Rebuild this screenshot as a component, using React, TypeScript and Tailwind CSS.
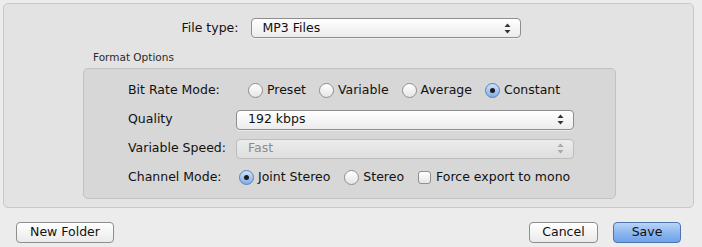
import React from "react";

const font = { fontFamily: '"DejaVu Sans", "Lucida Grande", sans-serif' };

const Arrows = ({ disabled }: { disabled?: boolean }) => (
    <svg width="7" height="11" viewBox="0 0 7 11" className="shrink-0">
        <path d="M3.5 0.5 L6.5 4 H0.5 Z" fill={disabled ? "#a8a8a8" : "#333"} />
        <path d="M3.5 10.5 L6.5 7 H0.5 Z" fill={disabled ? "#a8a8a8" : "#333"} />
    </svg>
);

const Popup = ({ value, width, disabled }: { value: string; width: string; disabled?: boolean }) => (
    <div
        className={`${width} h-[20px] flex items-center justify-between pl-[11px] pr-[9px] rounded-[4px] border ${
            disabled
                ? "border-[#bdbdbd] bg-gradient-to-b from-[#ececec] to-[#dedede] text-[#8c8c8c]"
                : "border-[#8e8e8e] bg-gradient-to-b from-[#ffffff] to-[#ececec] text-[#111] shadow-[0_1px_0_rgba(255,255,255,0.5)]"
        }`}
    >
        <span className="leading-none">{value}</span>
        <Arrows disabled={disabled} />
    </div>
);

const Radio = ({ label, checked }: { label: string; checked?: boolean }) => (
    <div className="flex items-center gap-[4px]">
        <div
            className={`size-[15px] rounded-full border flex items-center justify-center ${
                checked
                    ? "border-[#5b7fb5] bg-gradient-to-b from-[#cfe1fa] to-[#82aee9]"
                    : "border-[#8f8f8f] bg-gradient-to-b from-[#ffffff] to-[#e6e6e6]"
            }`}
        >
            {checked && <div className="size-[5px] rounded-full bg-[#1b1b1b]" />}
        </div>
        <span className="leading-none">{label}</span>
    </div>
);

const Button = ({ label, width, primary }: { label: string; width: string; primary?: boolean }) => (
    <div
        className={`${width} h-[21px] flex items-center justify-center rounded-[4px] border leading-none ${
            primary
                ? "border-[#4f74ad] bg-gradient-to-b from-[#b9d4f7] via-[#8db7ef] to-[#6fa2ea] text-[#111]"
                : "border-[#8e8e8e] bg-gradient-to-b from-[#ffffff] to-[#eaeaea] text-[#111]"
        }`}
    >
        {label}
    </div>
);

export default function App() {
    return (
        <div className="w-[702px] h-[247px] bg-[#ececec] text-[12.5px] text-[#111] overflow-hidden" style={font}>
            <div className="pt-[3px] px-[3px] pr-[8px]">
                {/* Main panel */}
                <div className="h-[205px] rounded-[5px] border border-[#c8c8c8] bg-[#e3e3e3] pt-[14px]">
                    <div className="flex items-center justify-center gap-[12px] pl-[5px]">
                        <span className="leading-none">File type:</span>
                        <Popup value="MP3 Files" width="w-[270px]" />
                    </div>

                    <div className="ml-[79px] w-[533px] mt-[14px]">
                        <div className="pl-[10px] text-[10.5px] leading-none text-[#2a2a2a] mb-[5px]">Format Options</div>
                        <div className="h-[131px] rounded-[5px] border border-[#c2c2c2] bg-[#d7d7d7] pt-[12px] pl-[44px] flex flex-col gap-[9px]">
                            <div className="flex items-center h-[20px]">
                                <span className="w-[120px] leading-none">Bit Rate Mode:</span>
                                <div className="flex items-center gap-[13px]">
                                    <Radio label="Preset" />
                                    <Radio label="Variable" />
                                    <Radio label="Average" />
                                    <Radio label="Constant" checked />
                                </div>
                            </div>
                            <div className="flex items-center h-[20px]">
                                <span className="w-[108px] leading-none">Quality</span>
                                <Popup value="192 kbps" width="w-[338px]" />
                            </div>
                            <div className="flex items-center h-[20px]">
                                <span className="w-[108px] leading-none">Variable Speed:</span>
                                <Popup value="Fast" width="w-[338px]" disabled />
                            </div>
                            <div className="flex items-center h-[20px]">
                                <span className="w-[111px] leading-none">Channel Mode:</span>
                                <div className="flex items-center gap-[14px]">
                                    <Radio label="Joint Stereo" checked />
                                    <Radio label="Stereo" />
                                    <div className="flex items-center gap-[5px]">
                                        <div className="size-[13px] rounded-[3px] border border-[#8f8f8f] bg-gradient-to-b from-[#ffffff] to-[#e6e6e6]" />
                                        <span className="leading-none">Force export to mono</span>
                                    </div>
                                </div>
                            </div>
                        </div>
                    </div>
                </div>
            </div>

            {/* Buttons */}
            <div className="flex items-center justify-between mt-[14px] pl-[16px] pr-[21px]">
                <Button label="New Folder" width="w-[98px]" />
                <div className="flex items-center gap-[15px]">
                    <Button label="Cancel" width="w-[69px]" />
                    <Button label="Save" width="w-[68px]" primary />
                </div>
            </div>
        </div>
    );
}
